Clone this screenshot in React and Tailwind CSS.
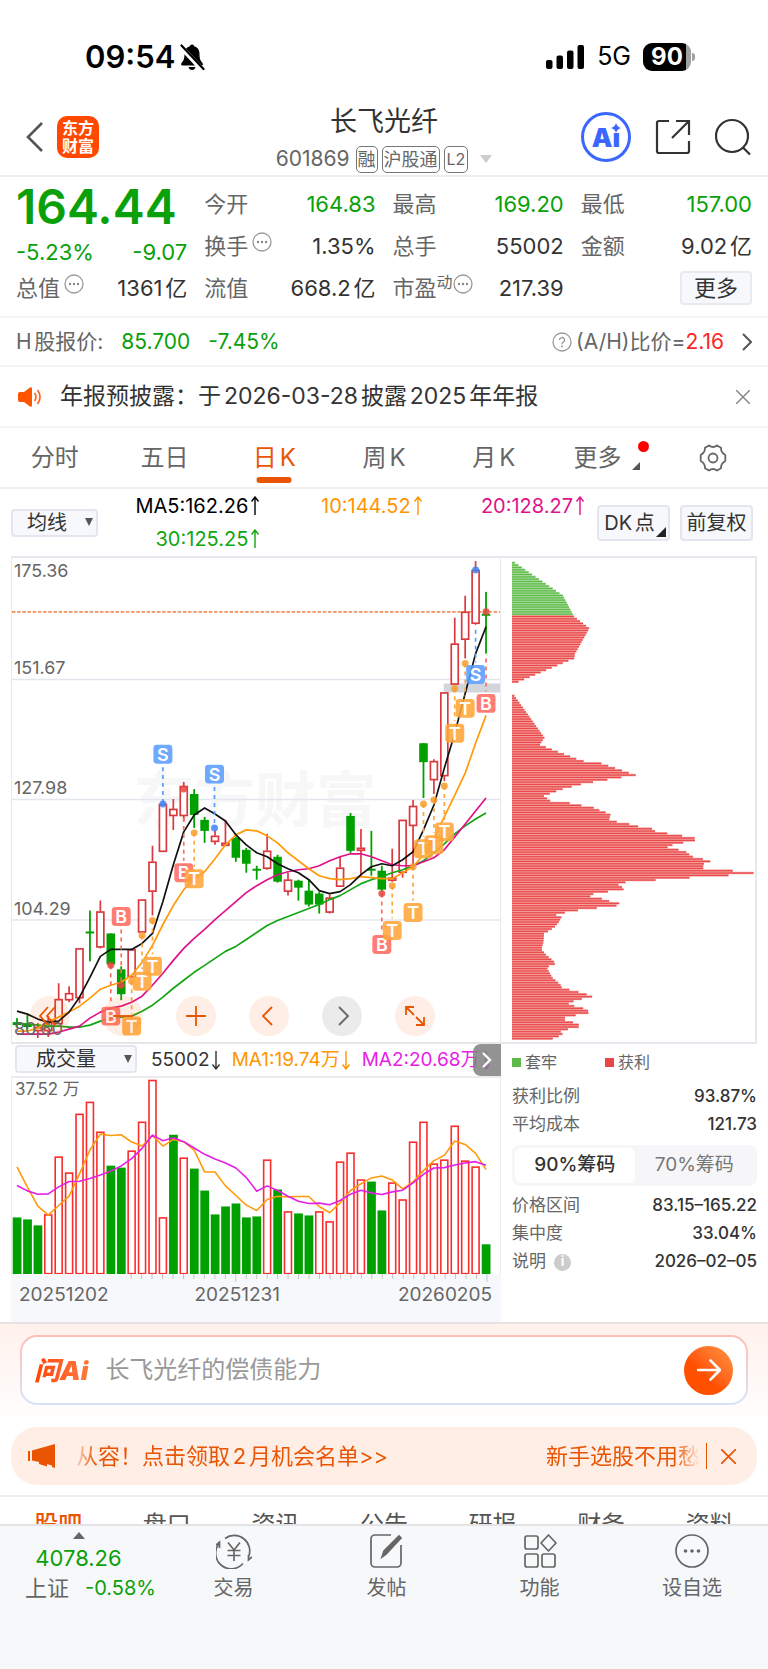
import React from "react";

const X0 = 5;
const STEP = 10.466;
const px = (i) => X0 + i * STEP;

/* [rising, bodyTop, bodyBottom, wickTop, wickBottom] */
const candles = [
  [0, 1023, 1026, 1019, 1028], [0, 1025, 1028, 1016, 1030], [1, 1028, 1031, 1024, 1039], [1, 1023, 1031, 1017, 1038],
  [1, 1000, 1024, 984, 1024], [1, 994, 1000, 987, 1003], [1, 949, 998, 949, 1004], [0, 932, 934, 911, 962],
  [1, 912, 947, 901, 949], [0, 934, 965, 934, 965], [0, 970, 995, 967, 1001], [1, 950, 977, 950, 977],
  [1, 900, 932, 900, 932], [1, 862, 891, 846, 916], [1, 804, 851, 804, 851], [1, 809, 815, 799, 830],
  [1, 786, 815, 782, 821], [0, 794, 815, 789, 828], [0, 820, 831, 817, 843], [1, 836, 841, 830, 845],
  [1, 843, 845, 820, 845], [0, 838, 858, 837, 862], [0, 850, 864, 848, 873], [0, 869, 871, 866, 880],
  [1, 851, 868, 834, 870], [0, 857, 882, 855, 883], [1, 880, 891, 873, 896], [0, 881, 888, 880, 901],
  [0, 891, 905, 880, 907], [0, 894, 905, 892, 914], [1, 898, 912, 895, 914], [1, 868, 886, 857, 886],
  [0, 816, 851, 813, 853], [1, 848, 850, 829, 877], [0, 869, 871, 831, 876], [0, 871, 890, 866, 892],
  [1, 878, 880, 849, 882], [1, 820, 872, 820, 878], [1, 806, 825, 800, 866], [0, 743, 762, 743, 798],
  [1, 761, 779, 759, 794], [1, 692, 775, 692, 781], [1, 643, 683, 617, 683], [1, 611, 638, 595, 658],
  [1, 569, 622, 560, 624], [0, 613, 615, 591, 653],
];

/* [index, label, badgeY, dotY] */
const marks = [
  [9, "B", 1017, 966], [10, "B", 917, 986], [11, "T", 1027, 982], [12, "T", 982, 936], [13, "T", 967, 921],
  [14, "S", 754, 804], [18.95, "S", 774, 828], [16, "B", 873, 789], [17, "T", 879, 833],
  [35, "B", 945, 894], [36, "T", 931, 886], [38, "T", 913, 867], [39, "T", 849, 804], [40, "T", 845, 800],
  [41, "T", 832, 786], [42, "T", 733, 688], [43, "T", 708, 663], [44, "S", 674, 569], [45, "B", 703, 611],
];
const markColor = { B: "#ff6b60", T: "#ffa63a", S: "#5a9dff" };

const ma5 = [1012, 1015, 1020, 1023, 1022, 1013, 998, 978, 957, 950, 950, 950, 944, 934, 902, 865, 832, 815, 808, 814, 821, 835, 845, 853, 857, 864, 869, 873, 880, 891, 894, 892, 885, 875, 867, 864, 866, 860, 852, 830, 805, 768, 733, 693, 653, 626];
const ma10 = [1032, 1032, 1029, 1023, 1018, 1013, 1007, 999, 990, 986, 983, 976, 963, 946, 925, 906, 890, 879, 872, 859, 845, 835, 830, 831, 836, 843, 853, 861, 869, 876, 879, 880, 879, 877, 878, 879, 879, 873, 867, 855, 838, 817, 795, 773, 743, 715];
const ma20 = [1035, 1035, 1035, 1035, 1033, 1030, 1027, 1019, 1013, 1009, 1007, 1003, 997, 986, 974, 961, 949, 939, 930, 920, 911, 902, 893, 886, 880, 875, 872, 870, 869, 866, 861, 857, 854, 854, 857, 861, 865, 866, 866, 862, 858, 850, 837, 824, 811, 798];
const ma30 = [1024, 1025, 1026, 1027, 1027, 1028, 1028, 1026, 1022, 1019, 1018, 1017, 1012, 1006, 998, 989, 981, 973, 966, 959, 952, 947, 940, 933, 926, 921, 917, 913, 909, 905, 900, 896, 890, 884, 880, 877, 873, 870, 866, 861, 853, 844, 834, 826, 819, 813];

const volumes = [57, 55, 49, 60, 118, 102, 161, 173, 143, 109, 107, 124, 153, 195, 57, 140, 117, 106, 84, 60, 68, 71, 57, 58, 115, 85, 63, 61, 59, 63, 53, 113, 122, 95, 93, 64, 92, 75, 133, 153, 111, 115, 149, 114, 108, 30];
const falling = new Set([0, 1, 2, 9, 10, 15, 17, 18, 19, 20, 21, 22, 23, 25, 27, 28, 34, 35, 45]);
const volMa1 = [379, 440, 497, 524, 495, 467, 400, 328, 280, 284, 282, 304, 316, 285, 316, 296, 303, 328, 394, 394, 436, 465, 494, 510, 477, 467, 469, 468, 468, 498, 517, 487, 450, 430, 412, 406, 418, 445, 424, 390, 360, 344, 301, 311, 338, 387];
const volMa2 = [435, 451, 461, 460, 439, 423, 422, 414, 403, 391, 376, 354, 323, 283, 300, 291, 303, 322, 341, 355, 367, 382, 411, 452, 436, 450, 467, 482, 489, 488, 493, 480, 461, 449, 457, 462, 454, 449, 427, 401, 382, 381, 373, 367, 363, 374];

/* outline of the chip distribution: [price level, extent] */
const chips = [
  [34, 45], [133, 190], [190, 220], [196, 223], [232, 270], [310, 226], [324, 224], [330, 207], [395, 53], [397, 36], [430, 36], [433, 41],
  [563, 134], [584, 120], [598, 155], [633, 247], [640, 304], [676, 410], [683, 367], [690, 325], [697, 282], [704, 245], [718, 190],
  [739, 132], [754, 152], [760, 207], [767, 242], [774, 281], [781, 298], [788, 317], [795, 334], [810, 330], [817, 352], [824, 390],
  [831, 416], [838, 459], [845, 467], [852, 503], [859, 548], [866, 588], [873, 592], [880, 557], [887, 523], [894, 503], [901, 537],
  [908, 562], [915, 571], [922, 579], [929, 609], [936, 639], [943, 617], [958, 612], [965, 701], [972, 770], [979, 697], [986, 579],
  [993, 477], [1000, 381], [1007, 357], [1014, 368], [1021, 378], [1028, 331], [1035, 284], [1042, 268], [1049, 305], [1056, 325],
  [1063, 360], [1070, 361], [1077, 302], [1084, 242], [1091, 202], [1098, 166], [1105, 186], [1119, 179], [1133, 168], [1147, 149],
  [1154, 133], [1182, 131], [1203, 125], [1218, 137], [1246, 170], [1253, 149], [1260, 142], [1289, 158], [1310, 183], [1317, 183],
  [1324, 205], [1331, 233], [1338, 257], [1345, 284], [1352, 252], [1359, 226], [1366, 205], [1373, 218], [1380, 248], [1387, 263],
  [1394, 276], [1401, 238], [1408, 198], [1415, 190], [1422, 215], [1429, 235], [1436, 246], [1443, 215], [1450, 180], [1457, 191],
  [1464, 183], [1474, 157],
];
const chipBars = Array.from({ length: 205 }, (_, k) => {
  const y = 34 + k * 7.055;
  const j = Math.max(1, chips.findIndex((c) => c[0] >= y));
  const [y0, w0] = chips[j - 1];
  const [y1, w1] = chips[j];
  const w = (w0 + ((w1 - w0) * (y - y0)) / (y1 - y0) - 36) / 3;
  return { y: y / 3 - 8, w, k };
}).filter((b) => b.w > 1);

const toPoints = (values, f) => values.map((v, i) => `${px(i)},${f(v)}`).join(" ");

function Arrow({ down }) {
  return (
    <svg viewBox="0 0 10 20" className="h-5 w-[10px] shrink-0" fill="none" stroke="currentColor" strokeWidth="1.400">
      <path d={down ? "M5 1v18M1.500 14.500 5 19l3.500-4.500" : "M5 19V1M1.500 5.500 5 1l3.500 4.500"} />
    </svg>
  );
}

function Dots() {
  return (
    <svg viewBox="0 0 20 20" className="size-5 shrink-0" fill="none" stroke="#999" strokeWidth="1.300">
      <circle cx="10" cy="10" r="9" />
      <g fill="#888" stroke="none">
        <circle cx="6" cy="10" r="1.200" /><circle cx="10" cy="10" r="1.200" /><circle cx="14" cy="10" r="1.200" />
      </g>
    </svg>
  );
}

function StatusBar() {
  return (
    <div className="flex h-10 items-center justify-between pl-[85px] pr-[73px] text-black">
      <div className="flex items-center gap-1">
        <span className="text-[31px] font-semibold">09:54</span>
        <svg viewBox="0 0 26 28" className="h-7 w-[26px]" fill="#000">
          <path d="M13 1.500c1.200 0 2 .8 2.100 1.800 3.400.9 5.400 3.800 5.400 7.400 0 5.800 1.300 7.200 3 9.300.9 1.200.4 2.500-1.100 2.500H3.600c-1.500 0-2-1.300-1.100-2.500 1.700-2.100 3-3.500 3-9.300 0-3.600 2-6.500 5.400-7.400.1-1 .9-1.800 2.100-1.800Z" />
          <path d="M9.500 24h7c-.5 2-1.800 3-3.500 3s-3-1-3.500-3Z" />
          <path d="M1 3 23.500 27" stroke="#fff" strokeWidth="5" />
          <path d="M2.500 2.500 24.500 26" stroke="#000" strokeWidth="2.200" strokeLinecap="round" />
        </svg>
      </div>
      <div className="flex items-center">
        <svg viewBox="0 0 39 24" className="h-6 w-[39px]" fill="#000">
          <rect x="0" y="15" width="6.500" height="9" rx="2" />
          <rect x="10.500" y="10.500" width="6.500" height="13.500" rx="2" />
          <rect x="21" y="5.500" width="6.500" height="18.500" rx="2" />
          <rect x="31.500" y="0" width="6.500" height="24" rx="2" />
        </svg>
        <span className="ml-3 text-[25px]">5G</span>
        <span className="ml-3 flex h-7 w-[48px] items-center justify-center rounded-[9px] bg-linear-to-r from-black from-90% to-neutral-400 to-90% text-[24px] font-bold text-white">90</span>
        <span className="ml-px h-2 w-[3px] rounded-r-full bg-neutral-400" />
      </div>
    </div>
  );
}

function Header() {
  return (
    <header className="mt-7 grid grid-cols-3 items-center border-b-2 border-[#ededed] px-[17px] pb-[2px]">
      <div className="flex items-center gap-3 pb-1">
        <button aria-label="返回" className="pl-2">
          <svg viewBox="0 0 20 32" className="h-8 w-5" fill="none" stroke="#555" strokeWidth="2.600"><path d="M17 2 3 16l14 14" /></svg>
        </button>
        <a href="#home" className="flex size-[42px] flex-col items-center justify-center rounded-[10px] bg-[#ff4800] text-[16px] font-bold leading-[18px] text-white">
          <span>东方</span>
          <span>财富</span>
        </a>
      </div>
      <div className="flex flex-col items-center gap-[6px]">
        <h1 className="text-[27px] leading-[34px] text-[#333]">长飞光纤</h1>
        <div className="flex items-center gap-1 whitespace-nowrap text-[#666]">
          <span className="mr-[2px] text-[21px] leading-7">601869</span>
          <span className="rounded-[5px] border border-[#777] px-px text-[18px] leading-[25px]">融</span>
          <span className="rounded-[5px] border border-[#777] px-px text-[18px] leading-[25px]">沪股通</span>
          <span className="rounded-[5px] border border-[#777] px-[2px] text-[16px] leading-[25px]">L2</span>
          <svg viewBox="0 0 12 8" className="ml-2 h-2 w-3" fill="#ccc"><path d="M0 0h12L6 8z" /></svg>
        </div>
      </div>
      <div className="flex items-center justify-end gap-6 pb-1">
        <button aria-label="Ai" className="relative flex size-[50px] items-center justify-center rounded-full border-[3px] border-[#3b66ff] text-[26px] font-black text-[#3b66ff]">
          <span>Ai</span>
          <svg viewBox="0 0 10 10" className="absolute right-[7px] top-[8px] size-[10px] bg-white" fill="#3b66ff"><path d="M5 0q1 4 5 5-4 1-5 5-1-4-5-5 4-1 5-5Z" /></svg>
        </button>
        <button aria-label="分享">
          <svg viewBox="0 0 36 36" className="size-9" fill="none" stroke="#333" strokeWidth="2.200">
            <path d="M14 2H4a2 2 0 0 0-2 2v28a2 2 0 0 0 2 2h28a2 2 0 0 0 2-2V22M21 2h13v14M34 2 17 19" />
          </svg>
        </button>
        <button aria-label="搜索">
          <svg viewBox="0 0 36 38" className="h-[38px] w-9" fill="none" stroke="#333" strokeWidth="2.200"><circle cx="17" cy="18" r="16" /><path d="m28 29.500 7 7" /></svg>
        </button>
      </div>
    </header>
  );
}

function Stat({ label, value, green, dots, sup }) {
  return (
    <div className="flex h-[42px] items-center justify-between whitespace-nowrap text-[22px]">
      <span className="flex items-center text-[#666]">
        {label}
        {sup && <span className="pb-3 text-[16px]">{sup}</span>}
        {dots && <span className={sup ? "pb-2" : "pb-2 pl-1"}><Dots /></span>}
      </span>
      <span className={green ? "text-[#0aa00a]" : "text-[#333]"}>{value}</span>
    </div>
  );
}

function Quote() {
  return (
    <section className="grid grid-cols-4 gap-[17px] border-b-2 border-[#f5f5f5] px-4 pb-[7px] pt-[6px]">
      <div>
        <div className="text-[48px] font-semibold leading-[48px] text-[#0aa00a]">164.44</div>
        <div className="flex h-[42px] items-center justify-between text-[22px] text-[#0aa00a]">
          <span>-5.23%</span><span>-9.07</span>
        </div>
        <div className="-mt-[6px]">
          <Stat label="总值" value="1361亿" dots />
        </div>
      </div>
      <div>
        <Stat label="今开" value="164.83" green />
        <Stat label="换手" value="1.35%" dots />
        <Stat label="流值" value="668.2亿" />
      </div>
      <div>
        <Stat label="最高" value="169.20" green />
        <Stat label="总手" value="55002" />
        <Stat label="市盈" sup="动" value="217.39" dots />
      </div>
      <div>
        <Stat label="最低" value="157.00" green />
        <Stat label="金额" value="9.02亿" />
        <div className="flex h-[42px] items-center justify-end">
          <button className="rounded border-2 border-[#e8eaf0] bg-[#f7f8fb] px-3 text-[22px] leading-[30px] text-[#333]">更多</button>
        </div>
      </div>
    </section>
  );
}

function HShare() {
  return (
    <section className="flex h-[49px] items-center border-b-2 border-[#f5f5f5] px-4 text-[21px] text-[#666]">
      <span>H股报价:</span>
      <span className="ml-[18px] text-[#0aa00a]">85.700</span>
      <span className="ml-[18px] text-[#0aa00a]">-7.45%</span>
      <a href="#ah" className="ml-auto flex items-center">
        <svg viewBox="0 0 20 20" className="mr-1 size-5" fill="none" stroke="#999" strokeWidth="1.300">
          <circle cx="10" cy="10" r="9" /><path d="M7.500 8a2.500 2.500 0 1 1 3.700 2.200Q10 11 10 12.200" /><circle cx="10" cy="14.500" r=".4" />
        </svg>
        (A/H)比价=<span className="text-[#fa2525]">2.16</span>
        <svg viewBox="0 0 10 18" className="ml-[18px] h-[18px] w-[10px]" fill="none" stroke="#555" strokeWidth="2"><path d="m1 1 8 8-8 8" /></svg>
      </a>
    </section>
  );
}

function Notice() {
  return (
    <section className="flex h-[61px] items-center border-b-2 border-[#f5f5f5] px-[18px] text-[23px] text-[#333]">
      <svg viewBox="0 0 25 20" className="h-5 w-[25px]" fill="#ff5500">
        <path d="M2 5h4l6-4.500q2-1 2 1v17q0 2-2 1L6 15H2q-2 0-2-2V7q0-2 2-2Z" />
        <path d="M16.500 6q3 4 0 8M19.500 3q5 7 0 14" fill="none" stroke="#ff6a20" strokeWidth="1.800" />
      </svg>
      <span className="ml-[17px]">年报预披露：于2026-03-28披露2025年年报</span>
      <button aria-label="关闭" className="ml-auto">
        <svg viewBox="0 0 14 14" className="size-[14px]" stroke="#888" strokeWidth="1.500"><path d="m0 0 14 14M14 0 0 14" /></svg>
      </button>
    </section>
  );
}

function PeriodTabs() {
  const tabs = ["分时", "五日", "日K", "周K", "月K"];
  return (
    <nav className="grid h-[61px] grid-cols-7 border-b-2 border-[#f0f0f0] text-[24px] text-[#666]">
      {tabs.map((t) => (
        <button key={t} className={t === "日K" ? "relative text-[#ea5504]" : "relative"}>
          {t}
          {t === "日K" && <span className="absolute bottom-1 left-1/2 h-[6px] w-[35px] -translate-x-1/2 rounded-[3px] bg-[#ea5504]" />}
        </button>
      ))}
      <button className="relative pr-3">
        更多
        <span className="absolute right-[9px] top-[13px] size-[11px] rounded-full bg-[#ff0000]" />
        <svg viewBox="0 0 8 8" className="absolute bottom-[17px] right-[18px] size-2" fill="#555"><path d="M8 0v8H0z" /></svg>
      </button>
      <button aria-label="设置" className="flex items-center justify-center">
        <svg viewBox="0 0 28 28" className="size-7" fill="none" stroke="#666" strokeWidth="1.800">
          <path d="M10 1.500Q14 4.500 18 1.500l4 2.300Q21.700 8.500 26.300 11v6q-4.600 2.500-4.300 7.200l-4 2.300Q14 23.500 10 26.500l-4-2.300Q6.300 19.500 1.700 17v-6Q6.300 8.500 6 3.800Z" strokeLinejoin="round" />
          <circle cx="14" cy="14" r="4.500" />
        </svg>
      </button>
    </nav>
  );
}

function Indicators() {
  const item = "flex items-center justify-end gap-[2px]";
  return (
    <section className="flex h-[67px] items-center pl-[11px] pr-[15px] text-[20px]">
      <div className="relative">
        <select aria-label="指标" className="h-7 w-[87px] appearance-none rounded border-2 border-[#e3e6ee] bg-[#f7f8fb] pl-[14px] text-[20px] leading-6 text-[#333]">
          <option>均线</option>
        </select>
        <svg viewBox="0 0 8 8" className="pointer-events-none absolute right-[5px] top-[10px] size-2" fill="#555"><path d="M0 0h8L4 8z" /></svg>
      </div>
      <div className="grid flex-1 grid-cols-3 leading-[33px]">
        <span className={`${item} text-black`}>MA5:162.26<Arrow /></span>
        <span className={`${item} text-[#ff9500]`}>10:144.52<Arrow /></span>
        <span className={`${item} text-[#e0128a]`}>20:128.27<Arrow /></span>
        <span className={`${item} text-[#0fa60f]`}>30:125.25<Arrow /></span>
      </div>
      <button className="relative ml-3 h-9 w-[73px] whitespace-nowrap rounded border-2 border-[#e3e6ee] bg-[#f7f8fb] pr-2 text-[20px] text-[#333]">
        DK点
        <svg viewBox="0 0 10 10" className="absolute bottom-[2px] right-[2px] size-[10px]" fill="#222"><path d="M10 0v10H0z" /></svg>
      </button>
      <button className="ml-[10px] h-9 w-[73px] whitespace-nowrap rounded border-2 border-[#e3e6ee] bg-[#f7f8fb] text-[20px] text-[#333]">前复权</button>
    </section>
  );
}

function Candles() {
  const labels = [["175.36", 576], ["151.67", 673], ["127.98", 794], ["104.29", 915], ["80.60", 1036]];
  const id = (v) => v;
  return (
    <svg viewBox="0 557 490 486" className="block h-auto w-full" fontFamily="Inter, 'Noto Sans CJK SC', sans-serif">
      <text x="122" y="822" fontSize="61" fontWeight="bold" fill="#f7f7f8">东方财富</text>
      <path d="M0 679h490M0 799.500h490M0 920.500h490" stroke="#e4e6ee" strokeWidth="1.500" />
      <rect x="433.500" y="683" width="56.500" height="9" fill="#d2d5da" />
      <path d="M0 611h490" stroke="#f5905a" strokeWidth="1.800" strokeDasharray="3.500 1.700" />
      {candles.map(([up, t, b, wt, wb], i) => {
        const x = px(i);
        return up ? (
          <g key={i} stroke="#d93a3f" strokeWidth="1.700">
            <path d={`M${x} ${wt}V${t}M${x} ${b}V${wb}`} />
            <rect x={x - 3.500} y={t + 0.5} width="7" height={b - t} fill="#fff" />
          </g>
        ) : (
          <g key={i} fill="#00a000">
            <rect x={x - 0.9} y={wt} width="1.800" height={wb - wt} />
            <rect x={x - 4.300} y={t} width="8.600" height={b - t} />
          </g>
        );
      })}
      <g fill="none" strokeWidth="1.700" strokeLinejoin="round">
        <polyline points={toPoints(ma30, id)} stroke="#12a512" />
        <polyline points={toPoints(ma20, id)} stroke="#e0128a" />
        <polyline points={toPoints(ma10, id)} stroke="#ff9a0a" />
        <polyline points={toPoints(ma5, id)} stroke="#111" />
      </g>
      {marks.map(([i, c, y, dot]) => {
        const x = px(i);
        const above = y < dot;
        const startY = c === "S" && i === 44 ? 629 : i === 45 ? 658 : i === 16 ? 818 : dot;
        const line = i === 44 ? `M${x} ${startY}V${y - 12}` : i === 45 || !above ? `M${x} ${startY}V${y - 12}` : `M${x} ${y + 13}V${dot}`;
        return (
          <g key={i + c}>
            <path d={line} stroke={markColor[c]} strokeWidth="1.700" strokeDasharray="4 4" />
            <circle cx={x} cy={dot} r="3.500" fill={c === "S" ? "#3d85f5" : c === "B" ? "#e8453c" : "#f79d2e"} fillOpacity="0.85" />
            <rect x={x - 9.500} y={y - 9.500} width="19" height="19" rx="3.500" fill={markColor[c]} fillOpacity="0.88" />
            <text x={x} y={y + 6.500} fontSize="18" fontWeight="600" fill="#fff" textAnchor="middle">{c}</text>
          </g>
        );
      })}
      <g fontSize="18" fill="#666">
        {labels.map(([t, y]) => <text key={t} x="2" y={y}>{t}</text>)}
      </g>
    </svg>
  );
}

function ChartControls() {
  const base = "flex size-10 items-center justify-center rounded-full";
  const warm = `${base} bg-[#ff5a00]/10 text-[#ea5504]`;
  const svg = { viewBox: "0 0 20 20", className: "size-5", fill: "none", stroke: "currentColor", strokeWidth: 1.8 };
  return (
    <div className="absolute bottom-[6px] left-[18px] flex gap-[33px]">
      <button aria-label="最早" className={`${warm} pr-1`}><svg {...svg}><path d="M10 1 2 10l8 9M17 1l-8 9 8 9" /></svg></button>
      <button aria-label="缩小" className={warm}><svg {...svg}><path d="M0 10h20" /></svg></button>
      <button aria-label="放大" className={warm}><svg {...svg}><path d="M0 10h20M10 0v20" /></svg></button>
      <button aria-label="向左" className={warm}><svg {...svg}><path d="M13 1 4 10l9 9" /></svg></button>
      <button aria-label="向右" className={`${base} bg-[#ebebeb] text-[#666]`}><svg {...svg}><path d="m7 1 9 9-9 9" /></svg></button>
      <button aria-label="全屏" className={warm}><svg {...svg}><path d="M9 1H1v8M1 1l8 8M11 19h8v-8M19 19l-8-8" /></svg></button>
    </div>
  );
}

function VolumeChart() {
  const f = (v) => (v - 111) / 3;
  return (
    <svg viewBox="0 0 490 197" className="block h-auto w-full" fontFamily="Inter, 'Noto Sans CJK SC', sans-serif">
      {volumes.map((h, i) =>
        falling.has(i) ? (
          <rect key={i} x={px(i) - 4.300} y={197 - h} width="8.800" height={h} fill="#00a000" />
        ) : (
          <rect key={i} x={px(i) - 3.500} y={197.500 - h} width="7" height={h - 1} fill="#fff" stroke="#fb2c2c" strokeWidth="1.600" />
        )
      )}
      <g fill="none" strokeWidth="1.600" strokeLinejoin="round">
        <polyline points={toPoints(volMa1, f)} stroke="#ff9a0a" />
        <polyline points={toPoints(volMa2, f)} stroke="#e61ee6" />
      </g>
      <text x="3" y="17" fontSize="17" fill="#666">37.52 万</text>
    </svg>
  );
}

function MainChart() {
  return (
    <div>
      <div className="relative border-x border-b-2 border-t-2 border-[#e6e8ee] border-b-[#e6e6e8]">
        <Candles />
        <ChartControls />
      </div>
      <div className="relative flex h-8 items-center overflow-hidden whitespace-nowrap pl-1 text-[19px] [text-autospace:no-autospace]">
        <div className="relative">
          <select aria-label="副图指标" className="h-7 w-[122px] appearance-none rounded border-2 border-[#e3e6ee] bg-[#f7f8fb] pl-[19px] text-[20px] leading-6 text-[#333]">
            <option>成交量</option>
          </select>
          <svg viewBox="0 0 8 8" className="pointer-events-none absolute right-[5px] top-[10px] size-2" fill="#555"><path d="M0 0h8L4 8z" /></svg>
        </div>
        <span className="ml-[14px] flex items-center gap-px text-[#333]">55002<Arrow down /></span>
        <span className="ml-[11px] flex items-center gap-px text-[#ff9500]">MA1:19.74万<Arrow down /></span>
        <span className="ml-[11px] flex items-center gap-px text-[#e61ee6]">MA2:20.68万<Arrow down /></span>
        <button aria-label="更多指标" className="absolute inset-y-0 right-0 flex w-7 items-center justify-center rounded-l-lg bg-[#808080]/85">
          <svg viewBox="0 0 10 16" className="h-4 w-[10px]" fill="none" stroke="#fff" strokeWidth="2.400"><path d="m1 1 7 7-7 7" /></svg>
        </button>
      </div>
      <div className="border-x border-t-2 border-[#ececee]">
        <VolumeChart />
      </div>
      <div className="bg-[#f7f8fb] pb-[15px]">
        <svg viewBox="0 0 490 8" className="block h-auto w-full" stroke="#c4c4c8">
          {volumes.map((_, i) => i > 10 && <path key={i} d={`M${px(i)} 0v${i === 21 || i === 45 ? 8 : 5}`} />)}
        </svg>
        <div className="grid grid-cols-[auto_1fr_auto] pl-2 pr-[9px] text-center text-[19px] leading-[25px] text-[#666]">
          <span>20251202</span><span className="pr-8">20251231</span><span>20260205</span>
        </div>
      </div>
    </div>
  );
}

function Row({ label, value, info }) {
  return (
    <div className="flex h-7 items-center justify-between text-[17px]">
      <dt className="flex items-center gap-2 text-[#666]">
        {label}
        {info && <span className="flex size-[17px] items-center justify-center rounded-full bg-[#ccc] text-[13px] font-bold text-white">i</span>}
      </dt>
      <dd className="font-medium text-[#333]">{value}</dd>
    </div>
  );
}

function ChipPanel() {
  return (
    <div>
      <div className="border-b-2 border-r-2 border-t-2 border-[#e6e8ee] pl-[11px]">
        <svg viewBox="0 -1.500 245 488" className="block h-auto w-full">
          {chipBars.map(({ y, w, k }) => (
            <g key={k} fill={k < 23 ? "#5cba46" : "#ea4646"}>
              <rect x="0" y={y - 1.200} width={w} height="2.400" opacity="0.6" />
              <rect x="0" y={y - 0.5} width={w} height="1.100" />
            </g>
          ))}
        </svg>
      </div>
      <div className="pl-[11px]">
        <div className="flex gap-12 pb-[3px] pt-[6px] text-[16px] leading-6 text-[#666]">
          <span className="flex items-center gap-1"><i className="size-[9px] bg-[#5cba46]" />套牢</span>
          <span className="flex items-center gap-1"><i className="size-[9px] bg-[#ea4646]" />获利</span>
        </div>
        <dl className="pt-[6px]">
          <Row label="获利比例" value="93.87%" />
          <Row label="平均成本" value="121.73" />
        </dl>
        <div className="my-[6px] grid h-[41px] grid-cols-2 rounded-lg bg-[#f6f6f9] p-[3px] text-[19px]">
          <button className="rounded-md bg-white font-medium text-[#333]">90%筹码</button>
          <button className="text-[#777]">70%筹码</button>
        </div>
        <dl>
          <Row label="价格区间" value="83.15–165.22" />
          <Row label="集中度" value="33.04%" />
          <Row label="说明" value="2026–02–05" info />
        </dl>
      </div>
    </div>
  );
}

function AskBar() {
  return (
    <section className="border-t-2 border-[#e6e2e2] bg-linear-to-b from-[#fff1ec] to-white px-5 pb-[22px] pt-[11px]">
      <form className="rounded-[17px] bg-linear-to-b from-[#ffbdb2] to-[#d6e2fb] p-[2px]">
        <div className="flex h-[66px] items-center rounded-[15px] bg-white pl-3 pr-[13px]">
          <label htmlFor="ask" className="whitespace-nowrap bg-linear-to-r from-[#ff4400] to-[#ff7a40] bg-clip-text pr-1 text-[26px] font-black italic text-transparent [text-autospace:no-autospace]">问Ai</label>
          <input id="ask" placeholder="长飞光纤的偿债能力" className="ml-[13px] min-w-0 flex-1 bg-transparent text-[24px] outline-none placeholder:text-[#999]" />
          <button type="button" aria-label="发送" className="flex size-[49px] items-center justify-center rounded-full bg-linear-to-bl from-[#ff9540] to-[#ff5000] to-60%">
            <svg viewBox="0 0 24 22" className="h-[22px] w-6" fill="none" stroke="#fff" strokeWidth="2.600" strokeLinecap="round" strokeLinejoin="round"><path d="M1 11h22M13.500 1.500 23 11l-9.500 9.500" /></svg>
          </button>
        </div>
      </form>
    </section>
  );
}

function Promo() {
  return (
    <section className="border-b-2 border-[#ececec] px-[11px] pb-[10px]">
      <div className="flex h-[58px] items-center rounded-[26px] bg-[#ffeee6] pl-[17px] pr-[21px] text-[22px] text-[#ea5504]">
        <svg viewBox="0 0 28 24" className="h-6 w-7 shrink-0" fill="#ea5504"><path d="M0 7h2v10H0zM4 6.500 27 0v24l-3-1v-1.500L19 20v2.500L11 20v-2l-7-1.500z" /></svg>
        <div className="ml-4 flex flex-1 justify-between overflow-hidden whitespace-nowrap [mask-image:linear-gradient(to_right,transparent,#000_24px,#000_calc(100%-24px),transparent)]">
          <span className="pl-1">从容！点击领取2月机会名单&gt;&gt;</span>
          <span>新手选股不用愁</span>
        </div>
        <span className="ml-[6px] h-[26px] w-px bg-[#ea5504]" />
        <button aria-label="关闭广告" className="ml-[14px]">
          <svg viewBox="0 0 15 15" className="size-[15px]" stroke="#ea5504" strokeWidth="1.700"><path d="m0 0 15 15M15 0 0 15" /></svg>
        </button>
      </div>
    </section>
  );
}

function SectionTabs() {
  return (
    <nav className="grid h-[27px] grid-cols-7 items-start overflow-hidden px-1 pt-[16px] text-[24px] leading-6 text-[#555]">
      {["股吧", "盘口", "资讯", "公告", "研报", "财务", "资料"].map((t, i) => (
        <button key={t} className={i === 0 ? "font-medium text-[#ea5504]" : ""}>{t}</button>
      ))}
    </nav>
  );
}

function BottomNav() {
  const cell = "flex flex-col items-center gap-[5px] pt-[7px] text-[20px] leading-7";
  const svg = { viewBox: "0 0 36 36", className: "size-9", fill: "none", stroke: "#666", strokeWidth: 1.7 };
  return (
    <nav className="grid grow grid-cols-[157fr_153fr_153fr_153fr_152fr] border-t-2 border-[#e4e4e6] bg-[#f7f8fa] pb-[62px] text-[#666]">
      <button className="flex flex-col items-center pt-[6px] text-[22px] leading-[30px]">
        <svg viewBox="0 0 12 7" className="h-[7px] w-3" fill="#666"><path d="M0 7h12L6 0z" /></svg>
        <span className="mt-1 text-[#0aa00a]">4078.26</span>
        <span className="flex whitespace-nowrap pl-6">上证<span className="pl-4 text-[20px] text-[#0aa00a]">-0.58%</span></span>
      </button>
      <button className={cell}>
        <svg {...svg}>
          <path d="M9 5.500A15.500 15.500 0 0 1 32.500 24M27 30.500A15.500 15.500 0 0 1 3.500 10M0 12l3.500-3v6M36 24l-3.500 3v-5" />
          <path d="m12 9.500 6 7.500 6-7.500M18 17v11M11.500 17.500h13M11.500 22.500h13" />
        </svg>
        交易
      </button>
      <button className={cell}>
        <svg {...svg}><path d="M22 2H6a4 4 0 0 0-4 4v24a4 4 0 0 0 4 4h22a4 4 0 0 0 4-4V12" /><path d="m13 24 2-6L30 3l2 2-15 16z" fill="#666" /></svg>
        发帖
      </button>
      <button className={cell}>
        <svg {...svg}><rect x="3" y="3" width="13" height="13" rx="2" /><rect x="3" y="21" width="13" height="13" rx="2" /><rect x="20" y="21" width="13" height="13" rx="2" /><path d="m26.500 2 7.500 8-7.500 8-7.500-8z" strokeLinejoin="round" /></svg>
        功能
      </button>
      <button className={cell}>
        <svg {...svg}><circle cx="18" cy="18" r="16" /><g fill="#666" stroke="none"><circle cx="11.500" cy="18" r="1.800" /><circle cx="18" cy="18" r="1.800" /><circle cx="24.500" cy="18" r="1.800" /></g></svg>
        设自选
      </button>
    </nav>
  );
}

export default function App() {
  return (
    <div className="flex min-h-screen flex-col bg-white pt-[37px] font-['Inter','Noto_Sans_CJK_SC',sans-serif] leading-normal [text-autospace:normal]">
      <StatusBar />
      <Header />
      <main>
        <Quote />
        <HShare />
        <Notice />
        <PeriodTabs />
        <Indicators />
        <section className="grid grid-cols-[490fr_256fr] pl-[11px] pr-[11px]">
          <MainChart />
          <ChipPanel />
        </section>
        <AskBar />
        <Promo />
        <SectionTabs />
      </main>
      <BottomNav />
    </div>
  );
}
